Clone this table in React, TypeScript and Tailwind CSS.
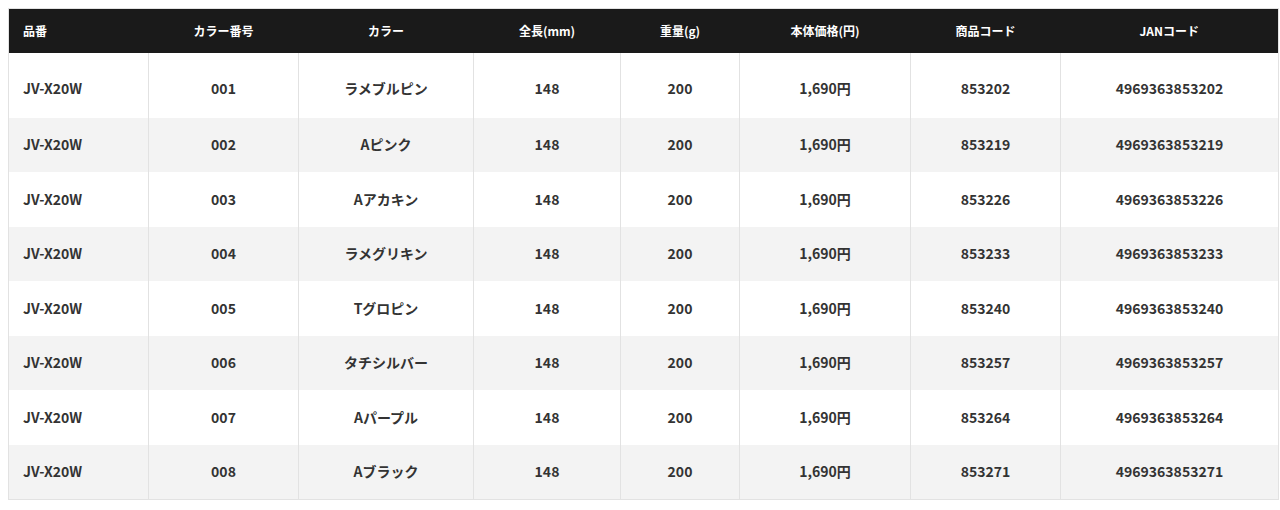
const headers = ["品番", "カラー番号", "カラー", "全長(mm)", "重量(g)", "本体価格(円)", "商品コード", "JANコード"];

const colors = ["ラメブルピン", "Aピンク", "Aアカキン", "ラメグリキン", "Tグロピン", "タチシルバー", "Aパープル", "Aブラック"];
const codes = ["853202", "853219", "853226", "853233", "853240", "853257", "853264", "853271"];

const rows = colors.map((c, i) => ({
  model: "JV-X20W",
  no: `00${i + 1}`,
  color: c,
  length: "148",
  weight: "200",
  price: "1,690円",
  code: codes[i],
  jan: `4969363${codes[i]}`,
}));

const widths = ["w-[140px]", "w-[150px]", "w-[175px]", "w-[147px]", "w-[119px]", "w-[171px]", "w-[150px]", "w-[218px]"];

export default function App() {
  return (
    <div className="w-[1280px] h-[510px] bg-white pl-2 pt-2 font-['Noto_Sans_CJK_JP','Noto_Sans',sans-serif]">
      <table className="w-[1270px] table-fixed border-collapse border border-[#e2e2e2]">
        <colgroup>
          {widths.map((w, i) => (
            <col key={i} className={w} />
          ))}
        </colgroup>
        <thead>
          <tr className="h-[44px] bg-[#1a1a1a] text-white text-[12px] font-bold">
            {headers.map((h, i) => (
              <th key={h} className={i === 0 ? "text-left pl-[14px]" : "text-center"}>
                {h}
              </th>
            ))}
          </tr>
        </thead>
        <tbody className="text-[14px] font-bold text-[#333]">
          {rows.map((r, i) => (
            <tr
              key={r.no}
              className={`${i === 0 ? "h-[65px]" : "h-[54.5px]"} ${i % 2 === 1 ? "bg-[#f3f3f3]" : "bg-white"}`}
            >
              <td className={`text-left pl-[14px] ${i === 0 ? "pt-[7px]" : ""}`}>{r.model}</td>
              {[r.no, r.color, r.length, r.weight, r.price, r.code, r.jan].map((v, j) => (
                <td key={j} className={`text-center border-l border-[#e2e2e2] ${i === 0 ? "pt-[7px]" : ""}`}>
                  {v}
                </td>
              ))}
            </tr>
          ))}
        </tbody>
      </table>
    </div>
  );
}
